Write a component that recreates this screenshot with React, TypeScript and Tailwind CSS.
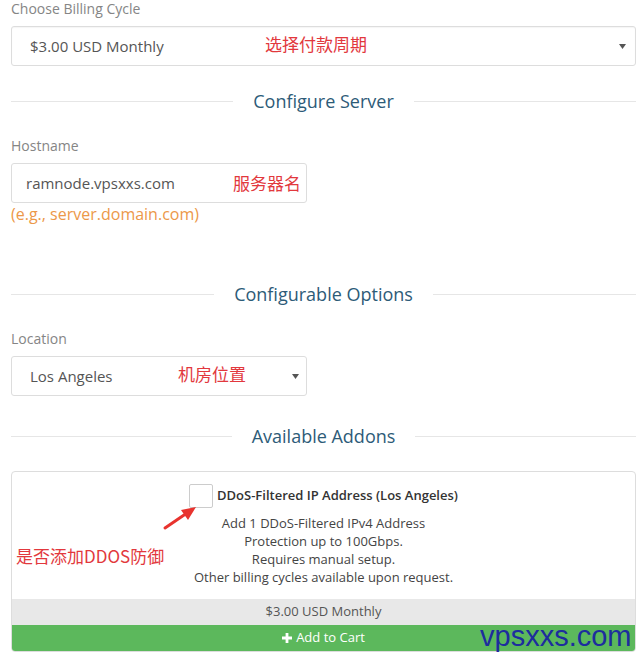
import React from "react";

const font = { fontFamily: '"Open Sans", "Noto Sans CJK SC", sans-serif' };

function Caret() {
  return (
    <svg width="7" height="5" viewBox="0 0 7 5" className="shrink-0">
      <path d="M0 0 L7 0 L3.5 5 Z" fill="#555" />
    </svg>
  );
}

function SectionHeading({ title }: { title: string }) {
  return (
    <div className="flex items-center">
      <div className="h-px flex-1 bg-[#e6e6e6]" />
      <h2 className="px-5 text-[18px] leading-6 text-[#2d5b78]">{title}</h2>
      <div className="h-px flex-1 bg-[#e6e6e6]" />
    </div>
  );
}

function Note({ children, className = "" }: { children: React.ReactNode; className?: string }) {
  return (
    <span
      className={`text-[17px] leading-6 text-[#e2383d] ${className}`}
      style={{ fontFamily: '"Noto Sans CJK SC", sans-serif' }}
    >
      {children}
    </span>
  );
}

export default function App() {
  return (
    <div className="relative w-[640px] h-[656px] overflow-hidden bg-white pl-[11px] pr-[4px]" style={font}>
      <label className="block text-[14px] leading-[18px] text-[#858585]">Choose Billing Cycle</label>
      <div className="mt-2 flex h-10 items-center rounded-[3px] border border-[#ddd] pl-[18px] pr-[9px] shadow-[inset_0_1px_1px_rgba(0,0,0,0.04)]">
        <span className="w-[235px] text-[15px] text-[#555]">$3.00 USD Monthly</span>
        <Note className="-mt-1">选择付款周期</Note>
        <div className="flex-1" />
        <Caret />
      </div>

      <div className="mt-[23px]">
        <SectionHeading title="Configure Server" />
      </div>

      <label className="mt-6 block text-[14px] leading-[18px] text-[#858585]">Hostname</label>
      <div className="mt-2 flex h-10 w-[296px] items-center rounded-[3px] border border-[#ddd] pl-[14px]">
        <span className="w-[207px] text-[15px] text-[#555]">ramnode.vpsxxs.com</span>
        <Note>服务器名</Note>
      </div>
      <p className="text-[16px] leading-[22px] text-[#ec9849]">(e.g., server.domain.com)</p>

      <div className="mt-[57px]">
        <SectionHeading title="Configurable Options" />
      </div>

      <label className="mt-6 block text-[14px] leading-[18px] text-[#858585]">Location</label>
      <div className="mt-2 flex h-10 w-[296px] items-center rounded-[3px] border border-[#ddd] pl-[18px] pr-[7px]">
        <span className="w-[148px] text-[15px] text-[#555]">Los Angeles</span>
        <Note className="-mt-1">机房位置</Note>
        <div className="flex-1" />
        <Caret />
      </div>

      <div className="mt-7">
        <SectionHeading title="Available Addons" />
      </div>

      <div className="relative mt-[23px] overflow-hidden rounded-[4px] border border-[#ddd]">
        <div className="px-4 pt-3 pb-[13px]">
          <div className="flex items-start justify-center gap-1">
            <div className="h-6 w-6 rounded-[2px] border border-[#ccc] bg-white" />
            <span className="text-[13px] font-semibold leading-[22px] text-[#333]">
              DDoS-Filtered IP Address (Los Angeles)
            </span>
          </div>
          <div className="mt-[6px] text-center text-[13px] leading-[18px] text-[#444]">
            <p>Add 1 DDoS-Filtered IPv4 Address</p>
            <p>Protection up to 100Gbps.</p>
            <p>Requires manual setup.</p>
            <p>Other billing cycles available upon request.</p>
          </div>
        </div>
        <div className="flex h-[26px] items-center justify-center bg-[#e8e8e8] text-[13px] text-[#555]">
          $3.00 USD Monthly
        </div>
        <div className="flex h-[26px] items-center justify-center gap-1 bg-[#5cb85c] text-[13px] text-white">
          <svg width="10" height="10" viewBox="0 0 10 10">
            <path d="M3.6 0h2.8v3.6H10v2.8H6.4V10H3.6V6.4H0V3.6h3.6z" fill="#fff" />
          </svg>
          Add to Cart
        </div>
      </div>

      {/* annotation overlays */}
      <Note className="absolute left-[16px] top-[544px]">是否添加DDOS防御</Note>
      <svg className="absolute left-[160px] top-[502px]" width="42" height="32" viewBox="0 0 42 32">
        <path d="M5 26 L27 11" stroke="#e8332e" strokeWidth="3" strokeLinecap="round" />
        <path d="M36 5 L21 8 L28 18 Z" fill="#e8332e" />
      </svg>
      <span
        className="absolute left-[480px] top-[619px] text-[29px] leading-[34px] text-[#1d2d9e]"
        style={{ fontFamily: '"Liberation Sans", Arial, sans-serif' }}
      >
        vpsxxs.com
      </span>
    </div>
  );
}
